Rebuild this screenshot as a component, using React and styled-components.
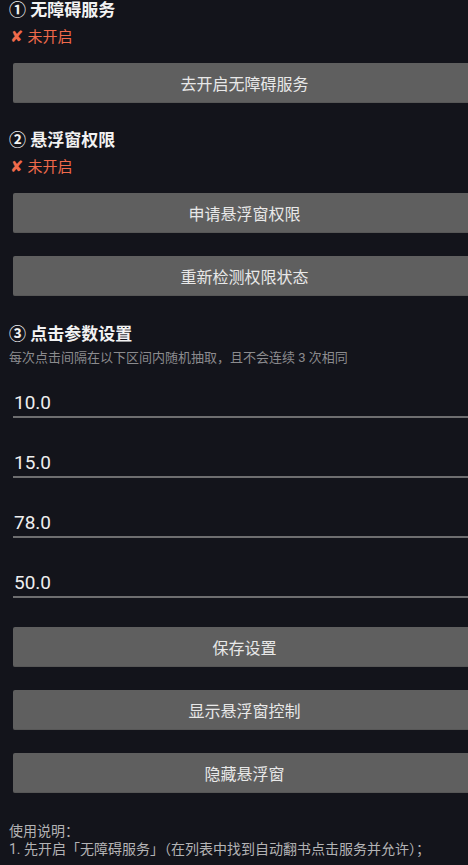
import React from "react";
import styled, { createGlobalStyle } from "styled-components";

const Global = createGlobalStyle`
  html, body {
    margin: 0;
    padding: 0;
    background: #13141b;
    overflow: hidden;
  }
  body {
    font-family: Roboto, "Noto Sans CJK SC", "Noto Sans", sans-serif;
  }
`;

const Page = styled.div`
  width: 468px;
  min-height: 865px;
  background: #13141b;
  padding: 0 0 0 9px;
  box-sizing: border-box;
  display: flex;
  flex-direction: column;
`;

const Title = styled.div`
  font-size: 17px;
  font-weight: 700;
  color: #f2f2f2;
  line-height: 20px;
  margin-top: ${(p) => p.$mt || 0}px;
`;

const Status = styled.div`
  font-size: 15px;
  color: #ef6a4b;
  line-height: 20px;
  margin-top: 7px;
  display: flex;
  align-items: center;
  gap: 4px;
`;

const Cross = styled.span`
  font-size: 16px;
  font-weight: 700;
  font-family: "DejaVu Sans", sans-serif;
  margin-left: 1px;
`;

const Button = styled.button`
  display: block;
  width: 463px;
  height: 40px;
  margin: ${(p) => p.$mt || 0}px 0 0 4px;
  background: #5f5f5f;
  border: none;
  border-bottom: 1px solid #575757;
  border-radius: 2px;
  color: #e8e8e8;
  font-family: Roboto, "Noto Sans CJK SC", sans-serif;
  font-size: 16px;
  padding: 0;
  box-sizing: border-box;
  flex-shrink: 0;
`;

const Hint = styled.div`
  font-size: 13px;
  color: #8b8b8e;
  line-height: 16px;
  margin-top: 6px;
`;

const Field = styled.input`
  display: block;
  width: 463px;
  height: 30px;
  margin: ${(p) => p.$mt || 0}px 0 0 4px;
  padding: 0 0 0 1px;
  box-sizing: border-box;
  background: transparent;
  border: none;
  border-bottom: 2px solid #6e6e70;
  color: #efefef;
  font-family: Roboto, "Noto Sans CJK SC", sans-serif;
  font-size: 19px;
  line-height: 28px;
  outline: none;
`;

const Notes = styled.div`
  margin-top: 29px;
  font-size: 14px;
  color: #b3b3b5;
  line-height: 18px;
`;

export default function App() {
  const values = ["10.0", "15.0", "78.0", "50.0"];
  return (
    <>
      <Global />
      <Page>
        <Title>① 无障碍服务</Title>
        <Status>
          <Cross>✘</Cross>未开启
        </Status>
        <Button $mt={16}>去开启无障碍服务</Button>

        <Title $mt={27}>② 悬浮窗权限</Title>
        <Status>
          <Cross>✘</Cross>未开启
        </Status>
        <Button $mt={16}>申请悬浮窗权限</Button>
        <Button $mt={23}>重新检测权限状态</Button>

        <Title $mt={28}>③ 点击参数设置</Title>
        <Hint>每次点击间隔在以下区间内随机抽取，且不会连续 3 次相同</Hint>
        {values.map((v, i) => (
          <Field key={i} readOnly value={v} $mt={i === 0 ? 22 : 30} />
        ))}

        <Button $mt={29}>保存设置</Button>
        <Button $mt={23}>显示悬浮窗控制</Button>
        <Button $mt={23}>隐藏悬浮窗</Button>

        <Notes>
          <div>使用说明：</div>
          <div>1. 先开启「无障碍服务」（在列表中找到自动翻书点击服务并允许）；</div>
        </Notes>
      </Page>
    </>
  );
}
